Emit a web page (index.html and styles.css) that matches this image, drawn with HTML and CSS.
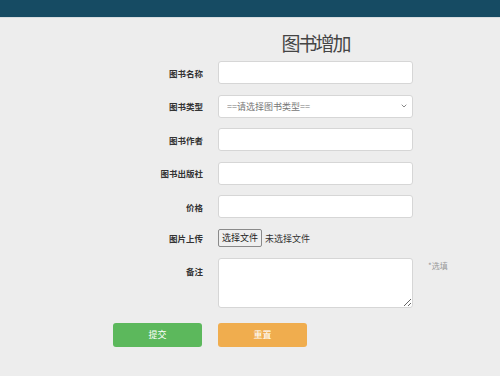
FILE: index.html
```html
<!DOCTYPE html>
<html>
<head>
    <meta charset="utf-8">
    <title>图书增加</title>
    <link rel="stylesheet" href="styles.css">
</head>
<body>
    <div class="topbar"></div>
    <div class="page">
        <h1 class="title">图书增加</h1>
        <form class="book-form" id="bookForm">
            <label class="form-label" for="bookName">图书名称</label>
            <input class="form-control" type="text" id="bookName">
            <span></span>

            <label class="form-label" for="bookType">图书类型</label>
            <select class="form-control" id="bookType">
                <option>==请选择图书类型==</option>
            </select>
            <span></span>

            <label class="form-label" for="bookAuthor">图书作者</label>
            <input class="form-control" type="text" id="bookAuthor">
            <span></span>

            <label class="form-label" for="bookPress">图书出版社</label>
            <input class="form-control" type="text" id="bookPress">
            <span></span>

            <label class="form-label" for="bookPrice">价格</label>
            <input class="form-control" type="text" id="bookPrice">
            <span></span>

            <span class="form-label">图片上传</span>
            <div class="file-field">
                <label class="file-btn" for="bookPic">选择文件</label>
                <span class="file-name">未选择文件</span>
                <input type="file" id="bookPic" class="file-hidden">
            </div>
            <span></span>

            <label class="form-label label-top" for="bookNote">备注</label>
            <textarea class="form-control note" id="bookNote"></textarea>
            <span class="hint">*选填</span>

            <button type="submit" class="btn btn-success">提交</button>
            <button type="reset" class="btn btn-warning">重置</button>
        </form>
    </div>
</body>
</html>
```

FILE: styles.css
```css
body {
    margin: 0;
    background-color: #ededed;
    font-family: "Noto Sans CJK SC", "Noto Sans", sans-serif;
    color: #333;
}
.topbar {
    height: 17px;
    background-color: #164b63;
    border-bottom: 1px solid #d8dde0;
}
.page {
    padding-left: 113px;
}
.title {
    width: 195px;
    margin: 12px 0 0 105px;
    text-align: center;
    font-size: 19px;
    font-weight: normal;
    line-height: 26px;
    color: #444;
    letter-spacing: -2px;
}
.book-form {
    display: grid;
    grid-template-columns: 90px 195px auto;
    column-gap: 15px;
    row-gap: 10.5px;
    margin-top: 5px;
    align-items: center;
}
.form-label {
    text-align: right;
    font-size: 8.5px;
    font-weight: bold;
    color: #333;
}
.label-top {
    align-self: start;
    padding-top: 7px;
}
.form-control {
    box-sizing: border-box;
    width: 195px;
    height: 23px;
    margin: 0;
    border: 1px solid #d6d6d6;
    border-radius: 3px;
    background-color: #fff;
    font-family: inherit;
    font-size: 9px;
    color: #777;
}
select.form-control {
    appearance: none;
    padding: 0 16px 0 8px;
    background-image: url("data:image/svg+xml;utf8,<svg xmlns='http://www.w3.org/2000/svg' width='6' height='4' viewBox='0 0 6 4'><path d='M0.7 0.7 L3 3 L5.3 0.7' fill='none' stroke='%23888' stroke-width='1'/></svg>");
    background-repeat: no-repeat;
    background-position: right 5px center;
    background-size: 6px 4px;
}
.note {
    height: 50px;
    resize: vertical;
}
.file-field {
    display: flex;
    align-items: center;
    gap: 3px;
    height: 19px;
}
.file-btn {
    box-sizing: border-box;
    height: 18px;
    padding: 0 3px;
    border: 1px solid #8a8a8a;
    border-radius: 2px;
    background-color: #efefef;
    font-size: 9px;
    line-height: 16px;
    color: #222;
}
.file-name {
    font-size: 9px;
    color: #333;
}
.file-hidden {
    display: none;
}
.hint {
    align-self: start;
    padding-top: 2px;
    font-size: 8px;
    color: #999;
}
.btn {
    height: 24px;
    margin-top: 4px;
    border: none;
    border-radius: 3px;
    color: #fff;
    font-family: inherit;
    font-size: 9px;
}
.btn-success {
    width: 89px;
    background-color: #5cb85c;
}
.btn-warning {
    width: 89px;
    background-color: #f0ad4e;
}
```
